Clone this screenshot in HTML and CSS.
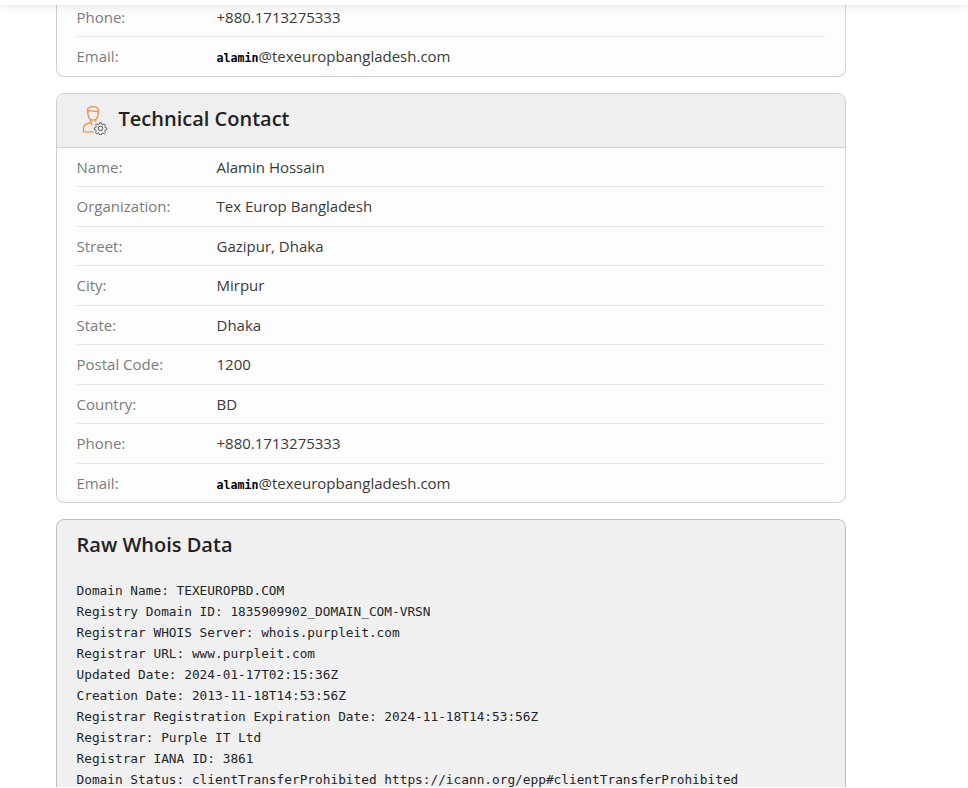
FILE: index.html
```html
<!DOCTYPE html>
<html lang="en">
<head>
<meta charset="utf-8">
<title>Whois</title>
<link rel="stylesheet" href="styles.css">
</head>
<body>
<header class="topbar"></header>
<main class="page">
  <section class="card card-first">
    <dl class="rows">
      <div class="row"><dt>Phone:</dt><dd>+880.1713275333</dd></div>
      <div class="row"><dt>Email:</dt><dd><span class="user">alamin</span>@texeuropbangladesh.com</dd></div>
    </dl>
  </section>
  <section class="card">
    <div class="card-head">
      <svg class="icon" width="26" height="30" viewBox="0 0 26 30" fill="none">
        <g stroke="#f58d46" stroke-width="1.3" stroke-linecap="round" stroke-linejoin="round">
          <path d="M5.500 5.700C5.500 2.900 7.500 1.700 11 1.700c3.800 0 5.600 1.500 5.500 4.400l-.6 4.300c-.6 3.300-2.800 4.800-4.900 4.800s-4.300-1.500-4.800-4.800Z"/>
          <path d="M5.800 7.400c.5-1.400 1.200-1.900 2.500-1.900 2.800 1.100 5 1.100 7.800.6"/>
          <path d="M8.500 14.600v2.800c-.8 1.300-5.200 1.400-6.300 3.200-.6 1.300-.7 3.500-.7 6.200H11"/>
          <path d="M8.500 17.400l1.500 2.400M13.800 14.800v1.800"/>
        </g>
        <g stroke="#555" stroke-width="1" stroke-linejoin="round">
          <path d="M17.300 17.200h2l.4 1.600 1.200.5 1.400-.9 1.400 1.400-.9 1.400.5 1.200 1.600.4v2l-1.600.4-.5 1.200.9 1.400-1.400 1.400-1.400-.9-1.200.5-.4 1.600h-2l-.4-1.600-1.200-.5-1.400.9-1.400-1.400.9-1.400-.5-1.200-1.600-.4v-2l1.600-.4.5-1.200-.9-1.400 1.400-1.400 1.400.9 1.200-.5Z" transform="translate(1.500 1.700) scale(.93)"/>
          <circle cx="18.500" cy="23.400" r="2.300"/>
        </g>
      </svg>
      <h2>Technical Contact</h2>
    </div>
    <dl class="rows">
      <div class="row"><dt>Name:</dt><dd>Alamin Hossain</dd></div>
      <div class="row"><dt>Organization:</dt><dd>Tex Europ Bangladesh</dd></div>
      <div class="row"><dt>Street:</dt><dd>Gazipur, Dhaka</dd></div>
      <div class="row"><dt>City:</dt><dd>Mirpur</dd></div>
      <div class="row"><dt>State:</dt><dd>Dhaka</dd></div>
      <div class="row"><dt>Postal Code:</dt><dd>1200</dd></div>
      <div class="row"><dt>Country:</dt><dd>BD</dd></div>
      <div class="row"><dt>Phone:</dt><dd>+880.1713275333</dd></div>
      <div class="row"><dt>Email:</dt><dd><span class="user">alamin</span>@texeuropbangladesh.com</dd></div>
    </dl>
  </section>
  <section class="card card-raw">
    <h2>Raw Whois Data</h2>
    <pre class="raw">Domain Name: TEXEUROPBD.COM
Registry Domain ID: 1835909902_DOMAIN_COM-VRSN
Registrar WHOIS Server: whois.purpleit.com
Registrar URL: www.purpleit.com
Updated Date: 2024-01-17T02:15:36Z
Creation Date: 2013-11-18T14:53:56Z
Registrar Registration Expiration Date: 2024-11-18T14:53:56Z
Registrar: Purple IT Ltd
Registrar IANA ID: 3861
Domain Status: clientTransferProhibited https://icann.org/epp#clientTransferProhibited</pre>
  </section>
</main>
</body>
</html>
```
FILE: styles.css
```css
* { box-sizing: border-box; }
html, body { height: 100%; overflow: hidden; }
body {
  margin: 0;
  padding-bottom: 1px;
  display: flex;
  flex-direction: column;
  background: #fff;
  color: #3a3a3a;
  font: 15px/22.5px "Open Sans", sans-serif;
}
.topbar {
  flex: none;
  height: 5px;
  background: #fff;
  box-shadow: 0 0 10px rgba(0, 0, 0, .16);
  position: relative;
  z-index: 1;
}
.page {
  flex: 1;
  min-height: 0;
  overflow: hidden;
  width: 790px;
  margin-left: 56px;
}
.card {
  border: 1px solid #d0d0d0;
  border-radius: 8px;
  background: #fdfdfd;
  margin-bottom: 16px;
  overflow: hidden;
}
.card-first {
  border-top: 0;
  border-radius: 0 0 8px 8px;
  margin-top: -7.5px;
}
.card-head {
  display: flex;
  align-items: flex-start;
  gap: 10px;
  height: 54px;
  padding: 11px 20px 0 25px;
  background: #efefef;
  border-bottom: 1px solid #d0d0d0;
}
.icon { flex: none; margin-right: .5px; }
h2 {
  margin: 0;
  font-size: 20px;
  line-height: 28px;
  font-weight: 600;
  color: #222;
}
.rows { margin: 0; padding: 0 20px; }
.row { display: flex; padding: 8px 0; border-bottom: 1px solid #e6e6e6; }
.row:last-child { border-bottom: 0; }
dt { width: 140px; color: #7c7c7c; }
dt, dd { text-indent: -.5px; }
dd { margin: 0; }
.user {
  font: bold 11.63px/1 "DejaVu Sans Mono", monospace;
  color: #000;
}
.card-raw {
  background: #f0f0f0;
  border-color: #bebebe;
  padding: 11px 20px 30px 19.5px;
}
.raw {
  margin: 21px 0 0;
  font: 12.79px/21px "DejaVu Sans Mono", monospace;
  color: #212529;
}
```
